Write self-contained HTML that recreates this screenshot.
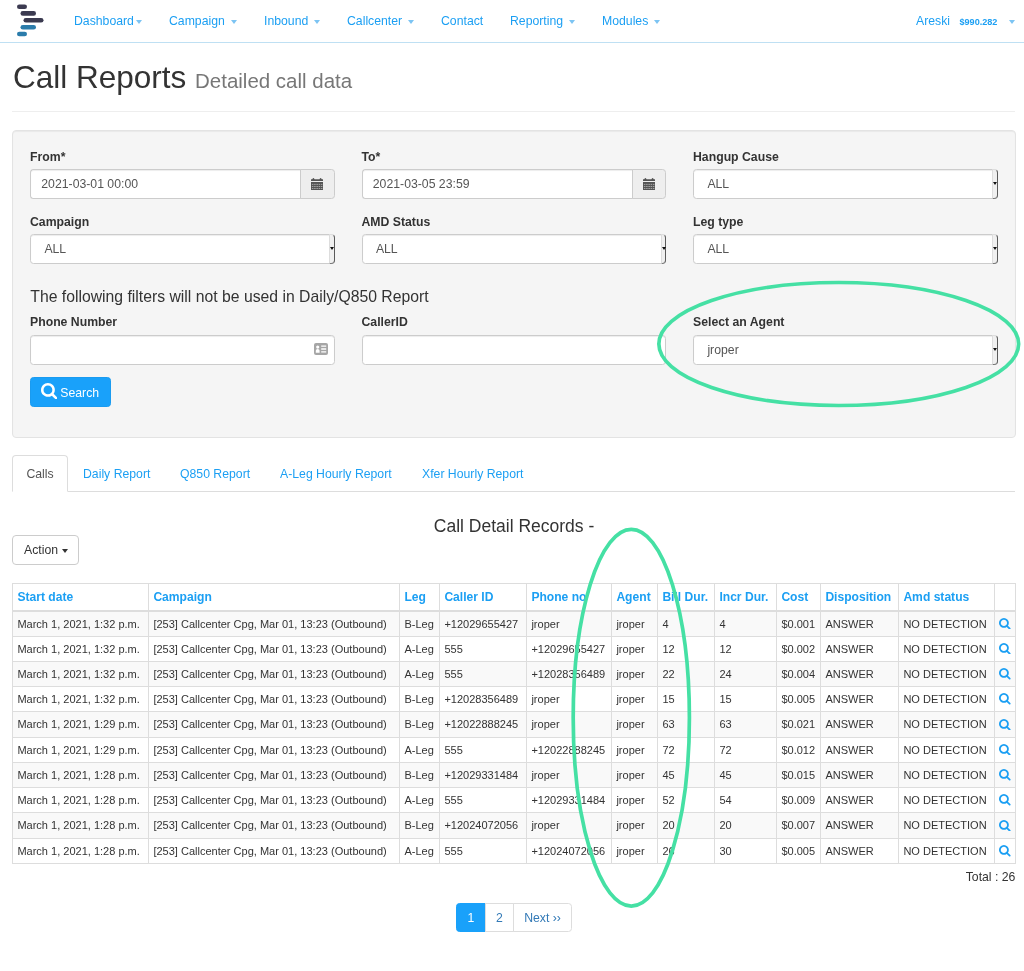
<!DOCTYPE html>
<html lang="en">
<head>
<meta charset="utf-8">
<title>Call Reports</title>
<style>
*{box-sizing:border-box}
html,body{margin:0;padding:0}
body{width:1024px;height:971px;overflow:hidden;background:#fff;position:relative;
 font-family:"Liberation Sans",Arial,sans-serif;font-size:12.25px;color:#333;line-height:1.42857}
a{color:#1b9ff3;text-decoration:none}
/* navbar */
.nav{position:absolute;left:0;top:0;width:1024px;height:43px;border-bottom:1px solid #bfe0f3;background:#fff}
.nav a{position:absolute;top:12px;font-size:12.25px;line-height:18px;white-space:nowrap}
.caret{display:inline-block;width:0;height:0;border-left:3.500px solid transparent;border-right:3.500px solid transparent;border-top:4px solid currentColor;vertical-align:middle;margin-left:2.500px;position:relative;top:.5px}
.nav .caret{color:#7cc4f3}
.logo{position:absolute;left:0;top:0}
h1{position:absolute;left:13px;top:57px;margin:0;font-weight:normal;font-size:31.5px;line-height:40px;color:#333;white-space:nowrap}
h1 small{font-size:20.475px;color:#777;font-weight:normal}
.hr{position:absolute;left:12px;top:111px;width:1003px;height:1px;background:#eee}
.well{position:absolute;left:12px;top:130px;width:1004px;height:307.500px;background:#f5f5f5;border:1px solid #e3e3e3;border-radius:4px;box-shadow:inset 0 1px 1px rgba(0,0,0,.05)}
.lbl{position:absolute;font-weight:bold;font-size:12.25px;line-height:18px;color:#333;white-space:nowrap}
.inp{position:absolute;height:29.500px;width:304.500px;background:#fff;border:1px solid #ccc;border-radius:3.500px;box-shadow:inset 0 1px 1px rgba(0,0,0,.075);font-size:12.25px;line-height:29.500px;color:#555;padding-left:10.300px;white-space:nowrap}
.inp.sel{padding-left:13.400px}
.inp.grp{width:271.500px;border-right:0;border-radius:3.500px 0 0 3.500px}
.addon{position:absolute;width:34.500px;height:29.500px;background:#eee;border:1px solid #ccc;border-radius:0 3.500px 3.500px 0}
.addon svg{position:absolute;left:9.900px;top:7.400px}
.dd{position:absolute;right:-1px;top:-1px;width:5.500px;height:29.500px;border-right:1.200px solid #5a5a5a;border-bottom:1.200px solid #777;border-left:1px solid #ddd;border-top:1px solid #ddd;border-radius:0 4px 4px 0;background:#f0f0f0}
.dd:after{content:"";position:absolute;left:0;top:12px;border-left:2px solid transparent;border-right:2px solid transparent;border-top:3px solid #111}
.note{position:absolute;left:30.300px;top:285.700px;font-size:15.75px;line-height:22px;color:#333;white-space:nowrap}
.btn-s{position:absolute;left:30px;top:377px;width:81px;height:30px;background:#19a1fa;border:1px solid #1a9bf0;border-radius:3.500px;color:#fff;font-size:12.25px;line-height:28px;white-space:nowrap}
.btn-s span{position:absolute;left:29.300px;top:.8px}
.btn-s svg{position:absolute;left:10px;top:5px}
/* tabs */
.tabs{position:absolute;left:12px;top:455px;width:1003px;height:37px;border-bottom:1px solid #ddd}
.tabs a{position:absolute;top:9.700px;font-size:12.25px;line-height:18px;white-space:nowrap}
.tabs .act{left:0;top:0;width:56px;height:37px;border:1px solid #ddd;border-bottom-color:#fff;border-radius:4px 4px 0 0;background:#fff;color:#555;text-align:center;line-height:36.400px}
.ttl{position:absolute;left:0;top:514px;width:1028px;text-align:center;font-size:17.5px;line-height:24px;color:#333}
.btn-a{position:absolute;left:12px;top:535px;width:67px;height:30px;border:1px solid #ccc;border-radius:4px;background:#fff;color:#333;font-size:12.25px;line-height:28px;padding-left:11px;white-space:nowrap}
.btn-a .caret{color:#333;margin-left:1px}
/* table */
table{position:absolute;left:12px;top:583px;width:1003px;border-collapse:collapse;table-layout:fixed;font-size:11.03px;color:#333}
th,td{border:1px solid #ddd;padding:0 0 0 4.400px;text-align:left;white-space:nowrap;overflow:hidden;height:25.28px;line-height:24px;vertical-align:middle}
th{color:#1b9ff3;font-weight:bold;font-size:12.100px;height:27px;border-bottom:2px solid #ddd}
tbody tr:nth-child(odd) td{background:#f9f9f9}
td svg{display:block;margin-top:0px;margin-left:-.4px}
.total{position:absolute;right:8.6px;top:868px;font-size:12.25px;line-height:18px;color:#333}
.pag{position:absolute;left:456px;top:903px;height:29px;font-size:12.25px}
.pag span{position:absolute;top:0;height:29px;border:1px solid #ddd;background:#fff;color:#337ab7;line-height:29.800px;text-align:center}
.ov{position:absolute;left:0;top:0;pointer-events:none}
</style>
</head>
<body>
<div id="wrap" style="position:absolute;left:0;top:0;width:1024px;height:971px;will-change:transform">
<div class="nav">
 <svg class="logo" width="60" height="42" viewBox="0 0 60 42">
  <g fill="none" stroke-linecap="round" stroke-width="4.6">
   <path d="M19.3 6.8H24.7" stroke="#3b3a50"/>
   <path d="M22.8 13.4H33.7" stroke="#3b3a50"/>
   <path d="M25.8 20.3H41.2" stroke="#3b3a50"/>
   <path d="M22.8 27.2H33.7" stroke="#2b7cab"/>
   <path d="M19.3 34H24.7" stroke="#2b7cab"/>
  </g>
 </svg>
 <a style="left:74px">Dashboard<span class="caret"></span></a>
 <a style="left:169px">Campaign <span class="caret"></span></a>
 <a style="left:264px">Inbound <span class="caret"></span></a>
 <a style="left:347px">Callcenter <span class="caret"></span></a>
 <a style="left:441px">Contact</a>
 <a style="left:510px">Reporting <span class="caret"></span></a>
 <a style="left:602px">Modules <span class="caret"></span></a>
 <a style="left:916px">Areski</a>
 <a style="left:959.500px;top:12.800px;font-size:9.100px;font-weight:bold">$990.282</a>
 <a style="left:1009px"><span class="caret" style="margin-left:0"></span></a>
</div>
<h1>Call Reports <small>Detailed call data</small></h1>
<div class="hr"></div>

<div class="well"></div>
<div class="lbl" style="left:30px;top:147.600px">From*</div>
<div class="lbl" style="left:361.500px;top:147.600px">To*</div>
<div class="lbl" style="left:693px;top:147.600px">Hangup Cause</div>
<div class="inp grp" style="left:30px;top:169.300px">2021-03-01 00:00</div>
<div class="addon" style="left:300.200px;top:169.300px"><svg width="12" height="12.400" viewBox="0 0 12 12.400"><path fill="#555" d="M1.200 1.300 L1.900 .2 Q2.400 -.1 2.900 .2 L3.600 1.300 H8.400 L9.100 .2 Q9.600 -.1 10.100 .2 L10.800 1.300 H12 V3.100 H0 V1.300 zM0 4H12V11.600a.8.800 0 0 1-.8.800H.8a.8.800 0 0 1-.8-.8z"/><path stroke="#c8c8c8" stroke-width=".7" stroke-dasharray="1.500 .75" fill="none" d="M.9 6.400h10.500M.9 8.500h10.500M.9 10.500h10.500"/></svg></div>
<div class="inp grp" style="left:361.500px;top:169.300px">2021-03-05 23:59</div>
<div class="addon" style="left:631.700px;top:169.300px"><svg width="12" height="12.400" viewBox="0 0 12 12.400"><path fill="#555" d="M1.200 1.300 L1.900 .2 Q2.400 -.1 2.900 .2 L3.600 1.300 H8.400 L9.100 .2 Q9.600 -.1 10.100 .2 L10.800 1.300 H12 V3.100 H0 V1.300 zM0 4H12V11.600a.8.800 0 0 1-.8.800H.8a.8.800 0 0 1-.8-.8z"/><path stroke="#c8c8c8" stroke-width=".7" stroke-dasharray="1.500 .75" fill="none" d="M.9 6.400h10.500M.9 8.500h10.500M.9 10.500h10.500"/></svg></div>
<div class="inp sel" style="left:693px;top:169.300px">ALL<i class="dd"></i></div>

<div class="lbl" style="left:30px;top:212.600px">Campaign</div>
<div class="lbl" style="left:361.500px;top:212.600px">AMD Status</div>
<div class="lbl" style="left:693px;top:212.600px">Leg type</div>
<div class="inp sel" style="left:30px;top:234.400px">ALL<i class="dd"></i></div>
<div class="inp sel" style="left:361.500px;top:234.400px">ALL<i class="dd"></i></div>
<div class="inp sel" style="left:693px;top:234.400px">ALL<i class="dd"></i></div>

<div class="note">The following filters will not be used in Daily/Q850 Report</div>
<div class="lbl" style="left:30px;top:312.600px">Phone Number</div>
<div class="lbl" style="left:361.500px;top:312.600px">CallerID</div>
<div class="lbl" style="left:693px;top:312.600px">Select an Agent</div>
<div class="inp" style="left:30px;top:335px"><svg style="position:absolute;left:283.200px;top:7.200px" width="14" height="12" viewBox="0 0 14 12"><rect x="0" y="0" width="14" height="12" rx="2" fill="#a6a6a6"/><circle cx="3.700" cy="4.100" r="1.600" fill="#fff"/><path d="M1.800 9.700V7.800Q1.800 6.100 3.700 6.100Q5.600 6.100 5.600 7.800V9.700z" fill="#fff"/><path d="M7.200 3.200h5M7.200 6h5M7.200 8.800h5" stroke="#fff" stroke-width="1.300"/></svg></div>
<div class="inp" style="left:361.500px;top:335px"></div>
<div class="inp sel" style="left:693px;top:335px">jroper<i class="dd"></i></div>
<div class="btn-s"><svg width="16.400" height="16.400" viewBox="64 128 1664 1664"><path fill="#fff" d="M1216 832q0-185-131.500-316.500t-316.500-131.500-316.500 131.500-131.500 316.500 131.500 316.500 316.500 131.500 316.500-131.500 131.500-316.500zm512 832q0 52-38 90t-90 38q-54 0-90-38l-343-342q-179 124-399 124-143 0-273.500-55.500t-225-150-150-225-55.500-273.500 55.500-273.500 150-225 225-150 273.500-55.500 273.500 55.500 225 150 150 225 55.500 273.500q0 220-124 399l343 343q37 37 37 90z"/></svg><span>Search</span></div>

<div class="tabs">
 <a class="act">Calls</a>
 <a style="left:71px">Daily Report</a>
 <a style="left:168px">Q850 Report</a>
 <a style="left:268px">A-Leg Hourly Report</a>
 <a style="left:410px">Xfer Hourly Report</a>
</div>
<div class="ttl">Call Detail Records -</div>
<div class="btn-a">Action <span class="caret"></span></div>

<table>
<colgroup><col style="width:136px"><col style="width:251px"><col style="width:40px"><col style="width:87px"><col style="width:85px"><col style="width:46px"><col style="width:57px"><col style="width:62px"><col style="width:44px"><col style="width:78px"><col style="width:96px"><col style="width:21px"></colgroup>
<thead><tr><th>Start date</th><th>Campaign</th><th>Leg</th><th>Caller ID</th><th>Phone no</th><th>Agent</th><th>Bill Dur.</th><th>Incr Dur.</th><th>Cost</th><th>Disposition</th><th>Amd status</th><th></th></tr></thead>
<tbody>
<tr><td>March 1, 2021, 1:32 p.m.</td><td>[253] Callcenter Cpg, Mar 01, 13:23 (Outbound)</td><td>B-Leg</td><td>+12029655427</td><td>jroper</td><td>jroper</td><td>4</td><td>4</td><td>$0.001</td><td>ANSWER</td><td>NO DETECTION</td><td><svg width="11.600" height="11.600" viewBox="64 128 1664 1664"><path fill="#1b9ff3" d="M1216 832q0-185-131.500-316.500t-316.500-131.500-316.500 131.500-131.500 316.500 131.500 316.500 316.500 131.500 316.500-131.500 131.500-316.500zm512 832q0 52-38 90t-90 38q-54 0-90-38l-343-342q-179 124-399 124-143 0-273.500-55.500t-225-150-150-225-55.500-273.500 55.500-273.500 150-225 225-150 273.500-55.500 273.500 55.500 225 150 150 225 55.500 273.500q0 220-124 399l343 343q37 37 37 90z"/></svg></td></tr>
<tr><td>March 1, 2021, 1:32 p.m.</td><td>[253] Callcenter Cpg, Mar 01, 13:23 (Outbound)</td><td>A-Leg</td><td>555</td><td>+12029655427</td><td>jroper</td><td>12</td><td>12</td><td>$0.002</td><td>ANSWER</td><td>NO DETECTION</td><td><svg width="11.600" height="11.600" viewBox="64 128 1664 1664"><path fill="#1b9ff3" d="M1216 832q0-185-131.500-316.500t-316.500-131.500-316.500 131.500-131.500 316.500 131.500 316.500 316.500 131.500 316.500-131.500 131.500-316.500zm512 832q0 52-38 90t-90 38q-54 0-90-38l-343-342q-179 124-399 124-143 0-273.500-55.500t-225-150-150-225-55.500-273.500 55.500-273.500 150-225 225-150 273.500-55.500 273.500 55.500 225 150 150 225 55.500 273.500q0 220-124 399l343 343q37 37 37 90z"/></svg></td></tr>
<tr><td>March 1, 2021, 1:32 p.m.</td><td>[253] Callcenter Cpg, Mar 01, 13:23 (Outbound)</td><td>A-Leg</td><td>555</td><td>+12028356489</td><td>jroper</td><td>22</td><td>24</td><td>$0.004</td><td>ANSWER</td><td>NO DETECTION</td><td><svg width="11.600" height="11.600" viewBox="64 128 1664 1664"><path fill="#1b9ff3" d="M1216 832q0-185-131.500-316.500t-316.500-131.500-316.500 131.500-131.500 316.500 131.500 316.500 316.500 131.500 316.500-131.500 131.500-316.500zm512 832q0 52-38 90t-90 38q-54 0-90-38l-343-342q-179 124-399 124-143 0-273.500-55.500t-225-150-150-225-55.500-273.500 55.500-273.500 150-225 225-150 273.500-55.500 273.500 55.500 225 150 150 225 55.500 273.500q0 220-124 399l343 343q37 37 37 90z"/></svg></td></tr>
<tr><td>March 1, 2021, 1:32 p.m.</td><td>[253] Callcenter Cpg, Mar 01, 13:23 (Outbound)</td><td>B-Leg</td><td>+12028356489</td><td>jroper</td><td>jroper</td><td>15</td><td>15</td><td>$0.005</td><td>ANSWER</td><td>NO DETECTION</td><td><svg width="11.600" height="11.600" viewBox="64 128 1664 1664"><path fill="#1b9ff3" d="M1216 832q0-185-131.500-316.500t-316.500-131.500-316.500 131.500-131.500 316.500 131.500 316.500 316.500 131.500 316.500-131.500 131.500-316.500zm512 832q0 52-38 90t-90 38q-54 0-90-38l-343-342q-179 124-399 124-143 0-273.500-55.500t-225-150-150-225-55.500-273.500 55.500-273.500 150-225 225-150 273.500-55.500 273.500 55.500 225 150 150 225 55.500 273.500q0 220-124 399l343 343q37 37 37 90z"/></svg></td></tr>
<tr><td>March 1, 2021, 1:29 p.m.</td><td>[253] Callcenter Cpg, Mar 01, 13:23 (Outbound)</td><td>B-Leg</td><td>+12022888245</td><td>jroper</td><td>jroper</td><td>63</td><td>63</td><td>$0.021</td><td>ANSWER</td><td>NO DETECTION</td><td><svg width="11.600" height="11.600" viewBox="64 128 1664 1664"><path fill="#1b9ff3" d="M1216 832q0-185-131.500-316.500t-316.500-131.500-316.500 131.500-131.500 316.500 131.500 316.500 316.500 131.500 316.500-131.500 131.500-316.500zm512 832q0 52-38 90t-90 38q-54 0-90-38l-343-342q-179 124-399 124-143 0-273.500-55.500t-225-150-150-225-55.500-273.500 55.500-273.500 150-225 225-150 273.500-55.500 273.500 55.500 225 150 150 225 55.500 273.500q0 220-124 399l343 343q37 37 37 90z"/></svg></td></tr>
<tr><td>March 1, 2021, 1:29 p.m.</td><td>[253] Callcenter Cpg, Mar 01, 13:23 (Outbound)</td><td>A-Leg</td><td>555</td><td>+12022888245</td><td>jroper</td><td>72</td><td>72</td><td>$0.012</td><td>ANSWER</td><td>NO DETECTION</td><td><svg width="11.600" height="11.600" viewBox="64 128 1664 1664"><path fill="#1b9ff3" d="M1216 832q0-185-131.500-316.500t-316.500-131.500-316.500 131.500-131.500 316.500 131.500 316.500 316.500 131.500 316.500-131.500 131.500-316.500zm512 832q0 52-38 90t-90 38q-54 0-90-38l-343-342q-179 124-399 124-143 0-273.500-55.500t-225-150-150-225-55.500-273.500 55.500-273.500 150-225 225-150 273.500-55.500 273.500 55.500 225 150 150 225 55.500 273.500q0 220-124 399l343 343q37 37 37 90z"/></svg></td></tr>
<tr><td>March 1, 2021, 1:28 p.m.</td><td>[253] Callcenter Cpg, Mar 01, 13:23 (Outbound)</td><td>B-Leg</td><td>+12029331484</td><td>jroper</td><td>jroper</td><td>45</td><td>45</td><td>$0.015</td><td>ANSWER</td><td>NO DETECTION</td><td><svg width="11.600" height="11.600" viewBox="64 128 1664 1664"><path fill="#1b9ff3" d="M1216 832q0-185-131.500-316.500t-316.500-131.500-316.500 131.500-131.500 316.500 131.500 316.500 316.500 131.500 316.500-131.500 131.500-316.500zm512 832q0 52-38 90t-90 38q-54 0-90-38l-343-342q-179 124-399 124-143 0-273.500-55.500t-225-150-150-225-55.500-273.500 55.500-273.500 150-225 225-150 273.500-55.500 273.500 55.500 225 150 150 225 55.500 273.500q0 220-124 399l343 343q37 37 37 90z"/></svg></td></tr>
<tr><td>March 1, 2021, 1:28 p.m.</td><td>[253] Callcenter Cpg, Mar 01, 13:23 (Outbound)</td><td>A-Leg</td><td>555</td><td>+12029331484</td><td>jroper</td><td>52</td><td>54</td><td>$0.009</td><td>ANSWER</td><td>NO DETECTION</td><td><svg width="11.600" height="11.600" viewBox="64 128 1664 1664"><path fill="#1b9ff3" d="M1216 832q0-185-131.500-316.500t-316.500-131.500-316.500 131.500-131.500 316.500 131.500 316.500 316.500 131.500 316.500-131.500 131.500-316.500zm512 832q0 52-38 90t-90 38q-54 0-90-38l-343-342q-179 124-399 124-143 0-273.500-55.500t-225-150-150-225-55.500-273.500 55.500-273.500 150-225 225-150 273.500-55.500 273.500 55.500 225 150 150 225 55.500 273.500q0 220-124 399l343 343q37 37 37 90z"/></svg></td></tr>
<tr><td>March 1, 2021, 1:28 p.m.</td><td>[253] Callcenter Cpg, Mar 01, 13:23 (Outbound)</td><td>B-Leg</td><td>+12024072056</td><td>jroper</td><td>jroper</td><td>20</td><td>20</td><td>$0.007</td><td>ANSWER</td><td>NO DETECTION</td><td><svg width="11.600" height="11.600" viewBox="64 128 1664 1664"><path fill="#1b9ff3" d="M1216 832q0-185-131.500-316.500t-316.500-131.500-316.500 131.500-131.500 316.500 131.500 316.500 316.500 131.500 316.500-131.500 131.500-316.500zm512 832q0 52-38 90t-90 38q-54 0-90-38l-343-342q-179 124-399 124-143 0-273.500-55.500t-225-150-150-225-55.500-273.500 55.500-273.500 150-225 225-150 273.500-55.500 273.500 55.500 225 150 150 225 55.500 273.500q0 220-124 399l343 343q37 37 37 90z"/></svg></td></tr>
<tr><td>March 1, 2021, 1:28 p.m.</td><td>[253] Callcenter Cpg, Mar 01, 13:23 (Outbound)</td><td>A-Leg</td><td>555</td><td>+12024072056</td><td>jroper</td><td>26</td><td>30</td><td>$0.005</td><td>ANSWER</td><td>NO DETECTION</td><td><svg width="11.600" height="11.600" viewBox="64 128 1664 1664"><path fill="#1b9ff3" d="M1216 832q0-185-131.500-316.500t-316.500-131.500-316.500 131.500-131.500 316.500 131.500 316.500 316.500 131.500 316.500-131.500 131.500-316.500zm512 832q0 52-38 90t-90 38q-54 0-90-38l-343-342q-179 124-399 124-143 0-273.500-55.500t-225-150-150-225-55.500-273.500 55.500-273.500 150-225 225-150 273.500-55.500 273.500 55.500 225 150 150 225 55.500 273.500q0 220-124 399l343 343q37 37 37 90z"/></svg></td></tr>
</tbody>
</table>
<div class="total">Total : 26</div>
<div class="pag">
 <span style="left:0;width:29.700px;background:#19a1fa;border-color:#19a1fa;color:#fff;border-radius:3.500px 0 0 3.500px">1</span>
 <span style="left:28.700px;width:29.300px">2</span>
 <span style="left:57px;width:59px;border-radius:0 3.500px 3.500px 0">Next &rsaquo;&rsaquo;</span>
</div>

<svg class="ov" width="1024" height="971" viewBox="0 0 1024 971">
 <ellipse cx="838.75" cy="344" rx="179.900" ry="61.500" fill="none" stroke="#45e0a4" stroke-width="3.700"/>
 <ellipse cx="631.3" cy="717.7" rx="58.100" ry="188.400" fill="none" stroke="#45e0a4" stroke-width="3.700"/>
</svg>
</div>
</body>
</html>
